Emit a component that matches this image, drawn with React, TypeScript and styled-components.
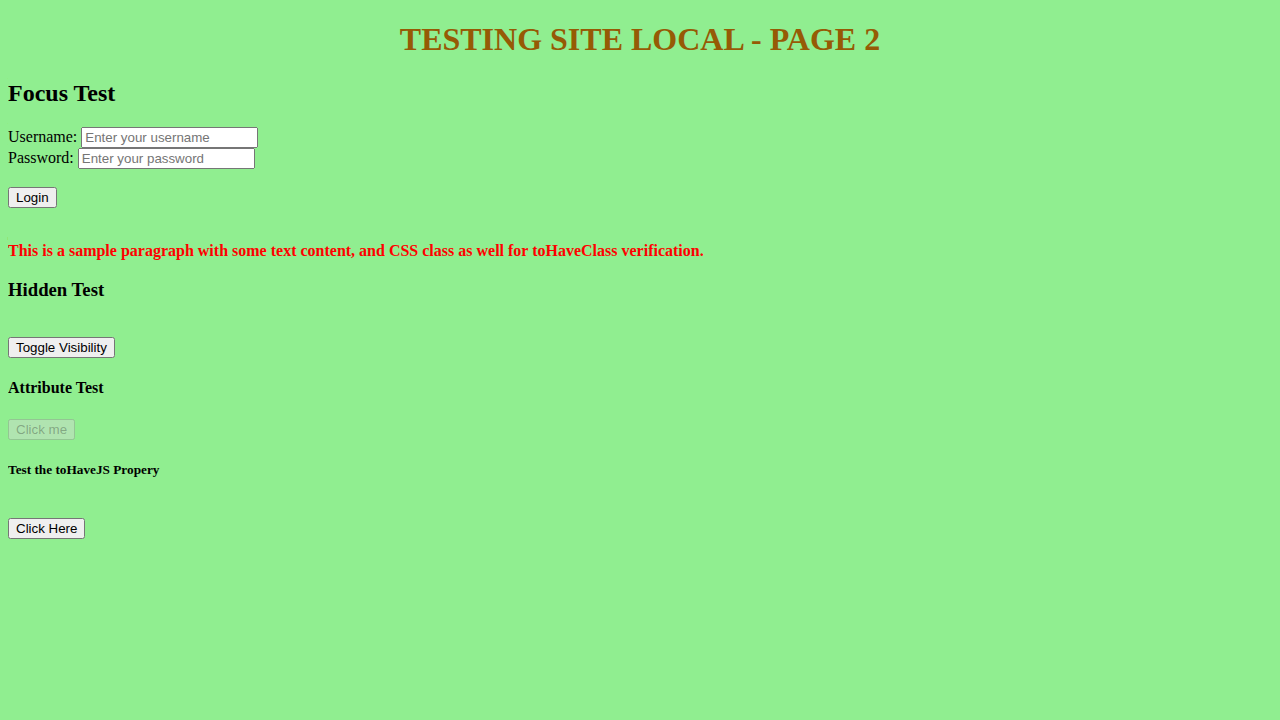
import React from "react";
import styled, { createGlobalStyle } from "styled-components";

const GlobalStyle = createGlobalStyle`
  html, body {
    background: #90ee90;
  }
  body {
    margin: 8px;
    font-family: "Liberation Serif", "Times New Roman", serif;
    font-size: 16px;
    color: #000;
  }
`;

const Title = styled.h1`
  margin: 13.44px 0 21.44px;
  font-size: 2em;
  font-weight: bold;
  text-align: center;
  color: #965a05;
`;

const SectionTitle = styled.h2`
  margin: 0.83em 0;
  font-size: 1.5em;
  font-weight: bold;
`;

const SubTitle = styled.h3`
  margin: 1em 0;
  font-size: 1.17em;
  font-weight: bold;
`;

const SmallTitle = styled.h4`
  margin: 1.33em 0;
  font-size: 1em;
  font-weight: bold;
`;

const TinyTitle = styled.h5`
  margin: 1.67em 0;
  font-size: 0.83em;
  font-weight: bold;
`;

const Form = styled.form`
  margin: 0;
`;

const Label = styled.label`
  font-size: 16px;
`;

const TextInput = styled.input`
  box-sizing: border-box;
  width: 177px;
  font-family: "Liberation Sans", Arial, sans-serif;
  font-size: 13.333px;
`;

const Button = styled.button`
  font-family: "Liberation Sans", Arial, sans-serif;
  font-size: 13.333px;
`;

const Highlight = styled.p`
  margin: 1em 0;
  font-weight: bold;
  color: #ff0000;
`;

export default function App() {
  return (
    <>
      <GlobalStyle />
      <Title>TESTING SITE LOCAL - PAGE 2</Title>
      <SectionTitle>Focus Test</SectionTitle>
      <Form onSubmit={(e) => e.preventDefault()}>
        <Label htmlFor="username">Username:</Label>{" "}
        <TextInput id="username" type="text" placeholder="Enter your username" />
        <br />
        <Label htmlFor="password">Password:</Label>{" "}
        <TextInput id="password" type="password" placeholder="Enter your password" />
        <br />
        <br />
        <Button type="submit">Login</Button>
      </Form>
      <br />
      <Highlight>
        This is a sample paragraph with some text content, and CSS class as well for toHaveClass verification.
      </Highlight>
      <SubTitle>Hidden Test</SubTitle>
      <br />
      <Button type="button">Toggle Visibility</Button>
      <SmallTitle>Attribute Test</SmallTitle>
      <Button type="button" disabled>
        Click me
      </Button>
      <TinyTitle>Test the toHaveJS Propery</TinyTitle>
      <br />
      <Button type="button">Click Here</Button>
    </>
  );
}
